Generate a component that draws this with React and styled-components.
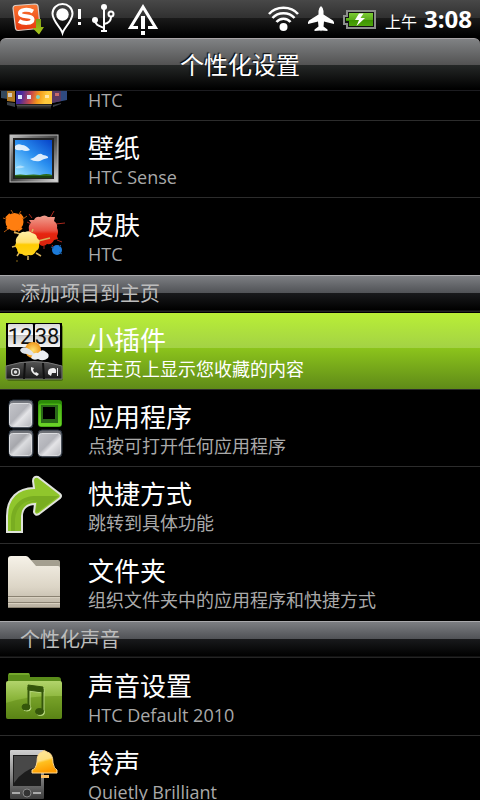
import React, { memo, useLayoutEffect, useRef } from 'react';
import styled, { createGlobalStyle } from 'styled-components';


const GlobalStyle = createGlobalStyle`
  * {
    box-sizing: border-box;
  }
  body {
    margin: 0;
    background: #000;
    color: #fff;
    font-family: 'Open Sans', 'Noto Sans CJK SC', sans-serif;
  }
`;

/* status bar icons */

const SogouIcon = () => (
  <svg width="32" height="38" viewBox="0 0 32 38">
    <defs>
      <linearGradient id="sogou" x1="0" y1="0" x2="0" y2="1">
        <stop offset="0" stopColor="#fb7a35" />
        <stop offset="1" stopColor="#e8370c" />
      </linearGradient>
      <linearGradient id="down" x1="0" y1="0" x2="0" y2="1">
        <stop offset="0" stopColor="#7d9c14" />
        <stop offset="1" stopColor="#a9c81c" />
      </linearGradient>
    </defs>
    <path d="M3 5.500 L23 4 Q25.500 4 26 6 L28 26 Q28 28 26 28.500 L6 30.500 Q4 30.500 3.500 28.500 L1 8 Q1 6 3 5.500Z" fill="url(#sogou)" stroke="#d9cfc8" strokeWidth="1.200" />
    <path d="M21 11.500 C16 8.500 7.500 9.500 8 13.500 C8.500 18 20.500 14.500 20.500 19.500 C20.500 24 11 23.500 7 21" fill="none" stroke="#fff" strokeWidth="4" />
    <path d="M24 19 H29 V27 H32 L27 34.500 L20.500 28 H24Z" fill="url(#down)" />
  </svg>
);

const PinIcon = () => (
  <svg width="33" height="38" viewBox="0 0 33 38">
    <path d="M11.500 33 C9.500 27 1.500 21 1.500 13.500 C1.500 8 6 4 11.500 4 C17 4 21.500 8 21.500 13.500 C21.500 21 13.500 27 11.500 33Z" fill="none" stroke="#fff" strokeWidth="2" />
    <circle cx="11.500" cy="14.500" r="6.200" fill="#fff" />
    <path d="M27 9 H30 V19 H27Z M27 22 H30 V25 H27Z" fill="#fff" />
  </svg>
);

const UsbIcon = () => (
  <svg width="24" height="38" viewBox="0 0 24 38">
    <g fill="none" stroke="#fff" strokeWidth="2">
      <path d="M13 6 V31 M10 31 H16" />
      <path d="M4 20 C4 25 8 26 13 28" />
      <path d="M13 24 C18 23 20 21 20 17" />
      <circle cx="20" cy="14" r="2.500" />
    </g>
    <circle cx="13" cy="7" r="3" fill="#fff" />
    <circle cx="4" cy="20" r="3" fill="#fff" />
  </svg>
);

const AlertIcon = () => (
  <svg width="38" height="38" viewBox="0 0 38 38">
    <path d="M16 27.500 H8.500 L21 7 L33.500 27.500 H26" fill="none" stroke="#fff" strokeWidth="3" />
    <path d="M19 16 H23 V29 H19Z M19 31 H23 V35 H19Z" fill="#fff" />
  </svg>
);

const WifiIcon = () => (
  <svg width="32" height="38" viewBox="0 0 32 38">
    <g fill="none" stroke="#fff" strokeWidth="2.500">
      <path d="M2 14 C9 5.500 24 5.500 31 14" />
      <path d="M5.500 18 C11 11.500 22 11.500 27.500 18" />
      <path d="M9.500 22 C13 17.500 20 17.500 23.500 22" />
    </g>
    <circle cx="16.500" cy="27" r="4" fill="#fff" />
  </svg>
);

const PlaneIcon = () => (
  <svg width="28" height="38" viewBox="0 0 28 38">
    <path d="M14 6 Q16.500 8 16.500 11 V14.500 L26 20.500 Q27.500 22 27 24 L17 21.500 L16.500 26.500 L20.500 29.500 V31 L14.500 30.500 L14 31.500 L13.500 30.500 L7.500 31 V29.500 L11.500 26.500 L11 21.500 L1 24 Q0.500 22 2 20.500 L11.500 14.500 V11 Q11.500 8 14 6Z" fill="#fff" />
  </svg>
);

const BatteryIcon = () => (
  <svg width="34" height="38" viewBox="0 0 34 38">
    <defs>
      <linearGradient id="battery" x1="0" y1="0" x2="0" y2="1">
        <stop offset="0" stopColor="#7ccc35" />
        <stop offset="0.500" stopColor="#5cae1c" />
        <stop offset="0.550" stopColor="#3d9400" />
        <stop offset="1" stopColor="#4da50a" />
      </linearGradient>
    </defs>
    <path d="M3 10 H33 V29 H3 V25 H0 V15 H3Z" fill="#8c8f8c" />
    <path d="M5 12 H31 V27 H5 V23 H2 V17 H5Z" fill="#111" />
    <path d="M6 13 H30 V26 H6 V21 H3 V18 H6Z" fill="url(#battery)" />
    <path d="M16 13.500 L12 20 H16 L13.500 26 L22 18 H17.500 L20.500 13.500Z" fill="#fff" />
  </svg>
);

/* row icons, drawn on the 80x76 cell at the left of a row */

const Cell = ({ children }) => (
  <svg width="80" height="76" viewBox="0 0 80 76" aria-hidden="true">{children}</svg>
);

const SceneIcon = () => (
  <Cell>
    <defs>
      <linearGradient id="scene" x1="0" y1="0" x2="1" y2="0.300">
        <stop offset="0" stopColor="#233a9c" />
        <stop offset="0.350" stopColor="#4b2a9e" />
        <stop offset="0.600" stopColor="#c94a4a" />
        <stop offset="0.800" stopColor="#f39a1c" />
        <stop offset="1" stopColor="#ffc93c" />
      </linearGradient>
      <linearGradient id="mirror" x1="0" y1="0" x2="0" y2="1">
        <stop offset="0" stopColor="#777" />
        <stop offset="1" stopColor="#000" />
      </linearGradient>
    </defs>
    <path d="M1 28 H14 V56 L1 54Z" fill="#33485c" />
    <path d="M7 28 H15 V58 L7 57Z" fill="#b27a22" />
    <path d="M52 28 H67 V56 L52 59Z" fill="#2f4a80" />
    <path d="M52 28 H61 V57 L52 59Z" fill="#5a3b62" />
    <path d="M7 58 L15 59 V63 L7 61Z M53 61 L61 59 V60 L53 63Z" fill="#3a3f46" />
    <rect x="16" y="20" width="36" height="40" fill="url(#scene)" />
    <rect x="16" y="60" width="36" height="2" fill="#222" />
    <rect x="17" y="61" width="34" height="5" fill="url(#mirror)" opacity="0.600" />
    <g fill="#dfe9ff">
      <rect x="18" y="51" width="4" height="4" />
      <rect x="27" y="51" width="4" height="4" />
      <circle cx="38" cy="53" r="2" fill="#7fd3c4" />
      <rect x="45" y="51" width="4" height="3" fill="#ffe6a8" />
      <rect x="8" y="49" width="4" height="4" opacity="0.700" />
      <rect x="55" y="49" width="4" height="3" fill="#c76a6a" />
    </g>
  </Cell>
);

const WallpaperIcon = () => (
  <Cell>
    <defs>
      <linearGradient id="frame" x1="0" y1="0" x2="1" y2="1">
        <stop offset="0" stopColor="#c9c9c9" />
        <stop offset="0.250" stopColor="#777" />
        <stop offset="0.500" stopColor="#444" />
        <stop offset="1" stopColor="#ddd" />
      </linearGradient>
      <linearGradient id="sky" x1="1" y1="0" x2="0.200" y2="1">
        <stop offset="0" stopColor="#0642c8" />
        <stop offset="0.500" stopColor="#2a8ff0" />
        <stop offset="1" stopColor="#8fdcff" />
      </linearGradient>
    </defs>
    <rect x="10" y="14" width="48" height="47" fill="url(#frame)" stroke="#bbb" />
    <rect x="13" y="17" width="41" height="41" fill="#222" />
    <rect x="15" y="19" width="37" height="36" fill="url(#sky)" />
    <rect x="15" y="54" width="37" height="3" fill="#1b3f10" />
    <path d="M15 54 Q20 53 26 54 Q34 53 40 54 Q47 52 52 54 V55 H15Z" fill="#2d6a1a" />
    <g fill="#fff" opacity="0.850">
      <path d="M15 25 Q18 22 22 24 Q26 24 30 29 Q26 31 22 29 Q17 30 15 28Z" />
      <path d="M30 38 Q34 37 36 35 Q40 31 43 34 Q49 35 48 37 Q43 38 40 40 Q34 41 30 38Z" />
      <path d="M16 46 Q20 43 25 46 Q20 48 16 47Z" opacity="0.500" />
    </g>
  </Cell>
);

const SkinIcon = () => (
  <Cell>
    <defs>
      <linearGradient id="red" x1="0" y1="0" x2="0" y2="1">
        <stop offset="0" stopColor="#f0a090" />
        <stop offset="0.500" stopColor="#e85040" />
        <stop offset="0.600" stopColor="#e62510" />
        <stop offset="1" stopColor="#d8230c" />
      </linearGradient>
      <linearGradient id="yellow" x1="0" y1="0" x2="0" y2="1">
        <stop offset="0" stopColor="#fff0a8" />
        <stop offset="0.450" stopColor="#ffe070" />
        <stop offset="0.550" stopColor="#ffcc00" />
        <stop offset="1" stopColor="#ffd21c" />
      </linearGradient>
    </defs>
    <path d="M6 21 L3 20 M13 15 L11 12 M19 16 L21 13 M23 21 L27 18 M8 31 L4 34 M15 33 V36" stroke="#b85c10" />
    <circle cx="14.500" cy="24" r="9" fill="#ff7e10" />
    <path d="M6 20 L10 16 M20 16 L23 20 M7 29 L9 31 M18 33 L22 30" stroke="#ff7e10" strokeWidth="2" />
    <path d="M50 20 L54 13 M56 26 L65 25 M57 42 L62 44 M32 20 L29 16 M31 26 L27 24 M44 48 L44 51 M52 47 L54 50" stroke="#a8281c" />
    <path d="M29 22 L34 22 Q36 18 40 19 Q45 16 48 19 L55 19 L54 23 Q58 26 57 30 Q59 34 57 38 L58 41 L54 42 Q52 47 47 46 Q43 50 39 46 Q33 45 32 40 Q27 37 29 32 Q28 27 31 25Z" fill="url(#red)" />
    <path d="M20 36 L14 34 M16 48 L12 49 M19 55 L17 58 M28 58 L28 62 M36 55 L41 58 M38 43 L50 40 M32 34 L33 31" stroke="#d8b45c" strokeWidth="1.500" />
    <path d="M18 38 Q21 33 25 34 Q29 32 32 35 Q37 36 37 40 Q41 43 39 46 Q40 51 36 53 Q34 58 29 57 Q25 59 22 56 Q17 56 17 51 Q14 48 16 45 Q15 41 18 38Z" fill="url(#yellow)" />
    <circle cx="57" cy="52" r="5" fill="#1c7ad8" />
    <path d="M51 49 L54 50 M61 47 L59 49 M62 56 L59 54" stroke="#1c5a98" />
    <circle cx="17" cy="63" r="1" fill="#5a4410" />
  </Cell>
);

const WidgetIcon = () => (
  <Cell>
    <defs>
      <linearGradient id="flip" x1="0" y1="0" x2="0" y2="1">
        <stop offset="0" stopColor="#d8d8d8" />
        <stop offset="0.500" stopColor="#fff" />
        <stop offset="0.520" stopColor="#ccc" />
        <stop offset="1" stopColor="#f4f4f4" />
      </linearGradient>
      <linearGradient id="dock" x1="0" y1="0" x2="0" y2="1">
        <stop offset="0" stopColor="#555" />
        <stop offset="1" stopColor="#181818" />
      </linearGradient>
      <radialGradient id="sun">
        <stop offset="0" stopColor="#ffe070" />
        <stop offset="1" stopColor="#f0981c" />
      </radialGradient>
    </defs>
    <rect x="7" y="12" width="56" height="56" rx="2" fill="#2c4408" opacity="0.500" />
    <rect x="6" y="10" width="56" height="56" fill="#000" />
    <rect x="8" y="11" width="25" height="23" rx="1" fill="url(#flip)" />
    <rect x="35" y="11" width="25" height="23" rx="1" fill="url(#flip)" />
    <path d="M8 22.500 H33 M35 22.500 H60" stroke="#bbb" />
    <g fill="#111" fontFamily="Roboto, sans-serif" fontSize="22" textAnchor="middle">
      <text x="20" y="31">12</text>
      <text x="47" y="31">38</text>
    </g>
    <circle cx="33" cy="37" r="8" fill="url(#sun)" />
    <path d="M20 37 Q22 33 27 35 Q32 37 35 42 Q30 43 27 41 Q21 41 20 37Z" fill="#dfe3ea" />
    <path d="M31 45 Q33 39 38 40 Q42 35 46 39 Q50 41 48 45 Q43 49 38 46 Q34 48 31 45Z" fill="#eceef2" />
    <path d="M6 53 Q34 44 62 53 V66 H6Z" fill="url(#dock)" stroke="#777" strokeWidth="1" />
    <path d="M25 50 L24 66 M43 50 L44 66" stroke="#111" strokeWidth="2" />
    <rect x="11" y="55" width="9" height="8" rx="3" fill="#ddd" />
    <circle cx="15.500" cy="59" r="2.500" fill="#ddd" stroke="#333" strokeWidth="1.500" />
    <path d="M31 54 Q30 60 37 63 L39 61 L36 59 L35 60 Q33 58 33 57 L34 55Z" fill="#eee" />
    <path d="M48 61 Q47 55 53 55 Q57 55 56 60 L52 60 L51 63Z M57 55 H58 V63 H57Z" fill="#eee" />
  </Cell>
);

const AppsIcon = () => (
  <Cell>
    <defs>
      <linearGradient id="steel" x1="0" y1="0" x2="1" y2="1">
        <stop offset="0" stopColor="#c4c5ca" />
        <stop offset="0.450" stopColor="#b2b3b9" />
        <stop offset="0.600" stopColor="#e4e4e7" />
        <stop offset="1" stopColor="#b4b5bb" />
      </linearGradient>
      <linearGradient id="steel2" x1="0" y1="0" x2="1" y2="1">
        <stop offset="0" stopColor="#c0c1c6" />
        <stop offset="0.400" stopColor="#a6a7ac" />
        <stop offset="0.550" stopColor="#dcdde0" />
        <stop offset="1" stopColor="#a8a9ae" />
      </linearGradient>
      <linearGradient id="lime" x1="0" y1="0" x2="0" y2="1">
        <stop offset="0" stopColor="#48b014" />
        <stop offset="1" stopColor="#6cd428" />
      </linearGradient>
    </defs>
    <g stroke="#26303c">
      <rect x="9" y="10" width="24" height="28" rx="4" fill="#74777e" />
      <rect x="9" y="40" width="24" height="27" rx="4" fill="#6e7177" />
      <rect x="38" y="40" width="24" height="27" rx="4" fill="#6e7177" />
    </g>
    <g stroke="#dcdde0">
      <rect x="9.500" y="13.500" width="22" height="23" rx="3" fill="url(#steel)" />
      <rect x="9.500" y="43.500" width="22" height="22" rx="3" fill="url(#steel2)" />
      <rect x="38.500" y="43.500" width="22" height="22" rx="3" fill="url(#steel)" />
    </g>
    <rect x="38" y="10" width="24" height="27" rx="3" fill="#2c8a08" />
    <rect x="38.500" y="13.500" width="23" height="23" rx="3" fill="url(#lime)" />
    <rect x="41" y="15" width="17" height="18" fill="#2a6a18" />
    <rect x="43" y="17" width="12" height="12" fill="#000" />
  </Cell>
);

const ShortcutIcon = () => (
  <Cell>
    <path d="M7 65 V49 C7 31 18 21 34 21 L33 14 Q33 9 38 10 L60 27 Q62 29 60 31 L39 47 Q35 49 34 45 L35 37 C27 37 22 42 22 49 V65Z" fill="#90c62c" stroke="#e0e3dc" strokeWidth="2" />
    <path d="M11 64 V52 C12 37 22 29 36 29 H59 L38 45 Q35 46 36 42 L37 35 C26 35 21 40 21 49 V64Z" fill="#6a9c1a" opacity="0.600" />
    <path d="M15 64 V52 C16 40 24 33 36 33 C26 35 21 40 21 49 V64Z" fill="#90c62c" opacity="0.500" />
  </Cell>
);

const FolderIcon = () => (
  <Cell>
    <defs>
      <linearGradient id="paper" x1="0" y1="0" x2="0" y2="1">
        <stop offset="0" stopColor="#f6f2e8" />
        <stop offset="0.600" stopColor="#dcd5c6" />
        <stop offset="1" stopColor="#b8b0a0" />
      </linearGradient>
    </defs>
    <path d="M28 16 H58 Q60 16 60 18 V30 H28Z" fill="#a49f90" />
    <path d="M8 64 V15 Q8 12 11 12 H26 Q28 12 30 15 L36 22 H58 Q60 22 60 24 V64Z" fill="url(#paper)" />
    <path d="M8 52.500 H60 M8 58.500 H60 M8 63.500 H60" stroke="#8a8272" />
    <path d="M8 53.500 H60 M8 59.500 H60" stroke="#d8d0c0" />
  </Cell>
);

const SoundIcon = () => (
  <Cell>
    <defs>
      <linearGradient id="green" x1="0" y1="0" x2="0" y2="1">
        <stop offset="0" stopColor="#b2d46c" />
        <stop offset="0.450" stopColor="#8cb63c" />
        <stop offset="1" stopColor="#58821a" />
      </linearGradient>
    </defs>
    <path d="M8 24 V16 Q8 14 10 14 H28 Q30 14 30 16 V18 H58 Q61 18 61 21 V24Z" fill="#5a8c1a" />
    <path d="M9 15 H29" stroke="#8cc43c" />
    <rect x="6" y="22" width="56" height="38" rx="2" fill="url(#green)" />
    <path d="M6 44 Q28 36 62 37 V58 Q62 60 60 60 H8 Q6 60 6 58Z" fill="#5c8410" opacity="0.450" />
    <g fill="#b8d880" stroke="#b8d880" transform="translate(1 1)">
      <path d="M28 26 L43 28 V33 L28 31Z" />
      <path d="M28.500 28 V48 M42.500 30 V52" strokeWidth="2" />
      <ellipse cx="26" cy="48" rx="4" ry="3" />
      <ellipse cx="39.500" cy="52.500" rx="4" ry="3" />
    </g>
    <g fill="#34560a" stroke="#34560a">
      <path d="M28 26 L43 28 V33 L28 31Z" />
      <path d="M28.500 28 V48 M42.500 30 V52" strokeWidth="2" />
      <ellipse cx="26" cy="48" rx="4" ry="3" />
      <ellipse cx="39.500" cy="52.500" rx="4" ry="3" />
    </g>
  </Cell>
);

const RingIcon = () => (
  <Cell>
    <defs>
      <linearGradient id="phone" x1="0" y1="0" x2="0" y2="1">
        <stop offset="0" stopColor="#d0d0d0" />
        <stop offset="0.500" stopColor="#8a8a8a" />
        <stop offset="1" stopColor="#3c3c3c" />
      </linearGradient>
      <linearGradient id="bell" x1="0" y1="0" x2="0.300" y2="1">
        <stop offset="0" stopColor="#ffe9a0" />
        <stop offset="0.500" stopColor="#ffdf80" />
        <stop offset="0.600" stopColor="#ffc020" />
        <stop offset="1" stopColor="#ff9c00" />
      </linearGradient>
    </defs>
    <rect x="10" y="14" width="34" height="49" rx="1" fill="url(#phone)" />
    <rect x="13" y="19" width="28" height="31" fill="#1c1c1c" />
    <path d="M14 20 H40 V30 Q22 34 14 47Z" fill="#484848" />
    <path d="M12 57 H20 M33 57 H41" stroke="#aaa" strokeWidth="2" />
    <circle cx="27" cy="57" r="4" fill="#333" stroke="#888" />
    <path d="M41 39 H49 V42 H41Z" fill="#ffc060" />
    <path d="M42 16 Q44 13 47 16 Q53 17 53 27 Q54 33 57 34 V37 H32 V34 Q36 33 37 26 Q37 17 42 16Z" fill="url(#bell)" stroke="#ffd890" strokeWidth="1" />
  </Cell>
);

const SECTIONS = [
  {
    rows: [
      { icon: SceneIcon, title: '场景', desc: 'HTC' },
      { icon: WallpaperIcon, title: '壁纸', desc: 'HTC Sense' },
      { icon: SkinIcon, title: '皮肤', desc: 'HTC' },
    ],
  },
  {
    name: '添加项目到主页',
    rows: [
      { icon: WidgetIcon, title: '小插件', desc: '在主页上显示您收藏的内容', active: true },
      { icon: AppsIcon, title: '应用程序', desc: '点按可打开任何应用程序' },
      { icon: ShortcutIcon, title: '快捷方式', desc: '跳转到具体功能' },
      { icon: FolderIcon, title: '文件夹', desc: '组织文件夹中的应用程序和快捷方式' },
    ],
  },
  {
    name: '个性化声音',
    rows: [
      { icon: SoundIcon, title: '声音设置', desc: 'HTC Default 2010' },
      { icon: RingIcon, title: '铃声', desc: 'Quietly Brilliant' },
    ],
  },
];

const StatusBar = memo(function () {
  return (
    <StyleStatus>
      <StatusGroup $gap={7}>
        <SogouIcon />
        <PinIcon />
        <UsbIcon />
        <AlertIcon />
      </StatusGroup>
      <StatusGroup $gap={8}>
        <WifiIcon />
        <PlaneIcon />
        <BatteryIcon />
        <Clock>
          <small>上午</small>
          <b>3:08</b>
        </Clock>
      </StatusGroup>
    </StyleStatus>
  )
})

export default function App() {
  const list = useRef(null);

  // the list opens scrolled past the first title
  useLayoutEffect(() => {
    list.current.scrollTop = 47;
  }, []);

  return (
    <Screen>
      <GlobalStyle />
      <StatusBar />
      <TitleBar>个性化设置</TitleBar>
      <List ref={list}>
        {SECTIONS.map(({ name, rows }, i) => (
          <section key={i}>
            {name && <SectionTitle>{name}</SectionTitle>}
            {rows.map(({ icon: Icon, title, desc, active }) => (
              <Row key={title} type="button" $active={active}>
                <Icon />
                <RowText $active={active}>
                  <strong>{title}</strong>
                  <span>{desc}</span>
                </RowText>
              </Row>
            ))}
          </section>
        ))}
      </List>
    </Screen>
  )
}

const Screen = styled.div`
  display: flex;
  flex-direction: column;
  height: 100vh;
`;

const StyleStatus = styled.header`
  flex: none;
  display: flex;
  justify-content: space-between;
  height: 38px;
  padding: 0 8px 0 12px;
  background: linear-gradient(#484848, #303030 18px, #1a1a1a 18px, #000 36px);
`;

const StatusGroup = styled.div`
  display: flex;
  gap: ${p => p.$gap}px;
`;

const Clock = styled.div`
  display: flex;
  align-items: baseline;
  gap: 7px;
  line-height: 38px;
  small {
    font-size: 16px;
  }
  b {
    font-size: 24px;
  }
`;

const TitleBar = styled.h1`
  flex: none;
  height: 53px;
  margin: 0;
  border-top: 1px solid #a8a4a6;
  border-bottom: 1px solid #1c1c20;
  border-radius: 6px 6px 0 0;
  background: linear-gradient(#808284, #525252 26px, #252827 26px, #000 50px);
  font-size: 24px;
  font-weight: 400;
  line-height: 52px;
  text-align: center;
  text-shadow: -1px -1px 1px #000;
`;

const List = styled.main`
  flex: 1;
  min-height: 0;
  overflow-y: auto;
  scrollbar-width: none;
`;

const SectionTitle = styled.h2`
  height: 38px;
  margin: 0;
  padding-left: 20px;
  border-top: 1px solid #a9a9ac;
  background: linear-gradient(#7c7e82, #505256 17px, #191a1c 17px, #000 34px, #242424 35px, #242424 36px, #000 36px);
  color: #bdbdbd;
  font-size: 20px;
  font-weight: 400;
  line-height: 35px;
`;

const Row = styled.button`
  display: flex;
  gap: 8px;
  width: 100%;
  height: 77px;
  padding: 0;
  border: 0;
  border-bottom: 1px solid #2c2c2c;
  background: ${p => p.$active ? 'linear-gradient(#b9ef36, #a3d245 35px, #8cc41c 35px, #5f8a18)' : '#000'};
  color: #fff;
  font-family: inherit;
  text-align: left;
  section:not(:last-child) > &:last-child {
    border-color: #000;
  }
`;

const RowText = styled.div`
  display: flex;
  flex-direction: column;
  padding-top: 10px;
  white-space: nowrap;
  strong {
    font-size: 26px;
    font-weight: 400;
    line-height: 34px;
  }
  span {
    color: ${p => p.$active ? '#fff' : '#a9a9a9'};
    font-size: 18px;
    line-height: 25px;
  }
`;
